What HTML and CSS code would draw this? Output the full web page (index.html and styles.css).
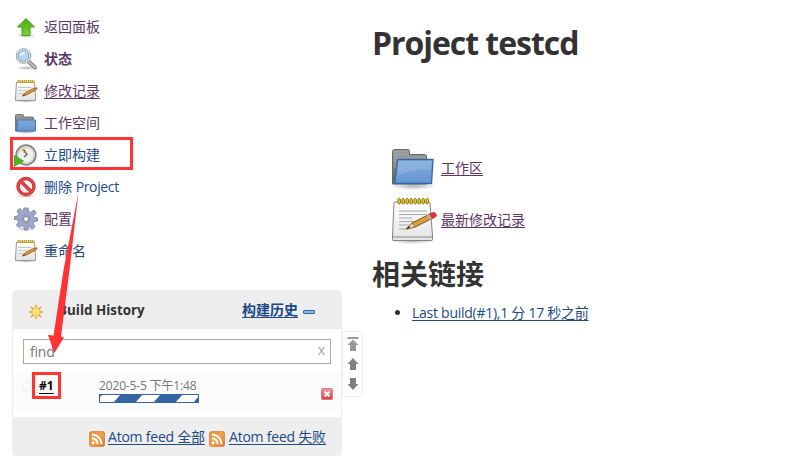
FILE: index.html
```html
<!DOCTYPE html>
<html lang="zh-CN">
<head>
<meta charset="utf-8">
<title>testcd</title>
<link rel="stylesheet" href="styles.css">
</head>
<body>
<svg class="defs" aria-hidden="true">
  <defs>
    <linearGradient id="green" x2="0" y2="1"><stop stop-color="#4ba51c"/><stop offset="1" stop-color="#7bd832"/></linearGradient>
    <linearGradient id="blue" x2="0" y2="1"><stop stop-color="#82aadb"/><stop offset="1" stop-color="#6597d0"/></linearGradient>
    <linearGradient id="gray" x2="0" y2="1"><stop stop-color="#a0a0a0"/><stop offset="1" stop-color="#626262"/></linearGradient>
    <linearGradient id="paper" x2="0" y2="1"><stop stop-color="#fff"/><stop offset="1" stop-color="#e4e4e4"/></linearGradient>
    <linearGradient id="orange" x2="1" y2="1"><stop stop-color="#e78734"/><stop offset=".5" stop-color="#f6a14a"/><stop offset="1" stop-color="#d8702a"/></linearGradient>
    <linearGradient id="red" x2="0" y2="1"><stop stop-color="#eca2a4"/><stop offset="1" stop-color="#d53b3e"/></linearGradient>
    <radialGradient id="shade"><stop stop-color="#000" stop-opacity=".3"/><stop offset="1" stop-color="#000" stop-opacity="0"/></radialGradient>
    <symbol id="folder" viewBox="0 0 48 48">
      <ellipse cx="24" cy="42" rx="24" ry="4" fill="url(#shade)"/>
      <path d="M3.500 40V7.500q0-2 2-2h13q2 0 2 2v3h15q2 0 2 2V40z" fill="url(#gray)" stroke="#666"/>
      <path d="M5 11h14M5 14h32M5 17h4M5 20h4M5 23h3" stroke="#aaa"/>
      <path d="M8.500 15.500h35.500l-1.500 24H5.500z" fill="url(#blue)" stroke="#3465a4" stroke-width="1.300" stroke-linejoin="round"/>
      <path d="M9.500 17h33l-.7 8Q22 25 8.500 32z" fill="#fff" opacity=".13"/>
    </symbol>
    <symbol id="folder-small" viewBox="0 0 24 24">
      <ellipse cx="12" cy="21" rx="11" ry="2" fill="url(#shade)"/>
      <path d="M1.500 20V4.500q0-1 1-1h6q1 0 1 1V6h9q1 0 1 1v13z" fill="url(#gray)" stroke="#777"/>
      <path d="M3.500 9h18v11h-19z" fill="url(#blue)" stroke="#4a79b5"/>
    </symbol>
    <symbol id="notepad" viewBox="0 0 48 48">
      <ellipse cx="23" cy="45" rx="22" ry="3" fill="url(#shade)"/>
      <path d="M6 6h34q1 0 1 1l2.500 33v3.500q0 1-1 1h-38q-1 0-1-1V40L5 7q0-1 1-1z" fill="url(#paper)" stroke="#858585" stroke-linejoin="round"/>
      <path d="M4 41h39" stroke="#b8b8b8" stroke-width="2"/>
      <path d="M10 15h28M10 18.500h28M10 22h13M10 25.500h27M10 29h21M10 33h10" stroke="#aaa"/>
      <g fill="#f6d52c" stroke="#806800" stroke-width=".9"><rect x="9" y="2.500" width="2.400" height="5.500" rx="1.200"/><rect x="13" y="2.500" width="2.400" height="5.500" rx="1.200"/><rect x="17" y="2.500" width="2.400" height="5.500" rx="1.200"/><rect x="21" y="2.500" width="2.400" height="5.500" rx="1.200"/><rect x="25" y="2.500" width="2.400" height="5.500" rx="1.200"/><rect x="29" y="2.500" width="2.400" height="5.500" rx="1.200"/><rect x="33" y="2.500" width="2.400" height="5.500" rx="1.200"/><rect x="37" y="2.500" width="2.400" height="5.500" rx="1.200"/></g>
      <path d="M17 33l6-6 18-9 3 4-18 9z" fill="#d9a043" stroke="#855716"/>
      <path d="M17 33l6-6 3 4z" fill="#efd7ad" stroke="#855716" stroke-width=".7"/><path d="M17 33l3-3 1 1.500z" fill="#222"/>
      <path d="M38 19.500l3-1.500 3 4-3 1.500z" fill="#bbb"/><path d="M40.500 18q5-3 6.500 0t-4 4.500z" fill="#e33" stroke="#b22" stroke-width=".7"/>
    </symbol>
    <symbol id="notepad-small" viewBox="0 0 24 24">
      <ellipse cx="12" cy="22" rx="11" ry="1.800" fill="url(#shade)"/>
      <path d="M2.500 3.500h18l1 15v3h-20v-3z" fill="url(#paper)" stroke="#999" stroke-linejoin="round"/>
      <path d="M4 8.500h13M4 11.500h9M4 14.500h6" stroke="#c4c4c4"/>
      <path d="M3.500 2.500h17" stroke="#c5a729" stroke-width="3" stroke-dasharray="1.500 .5"/>
      <path d="M8.500 17l3-3.500 8.500-4.500 1.500 2.200-9 4.800z" fill="#d79b3e" stroke="#8b611f" stroke-width=".8"/><path d="M8.500 17l1.500-1.700 1 1z" fill="#333"/>
      <path d="M20 9q3-1.500 3.500 0t-2 2.200z" fill="#de5a38"/>
    </symbol>
    <symbol id="rss" viewBox="0 0 16 16"><rect x=".4" y=".4" width="15.200" height="15.200" rx="2.500" fill="url(#orange)" stroke="#d57731" stroke-width=".7"/><circle cx="4.200" cy="11.800" r="1.500" fill="#fff"/><path d="M2.800 7.200a6 6 0 0 1 6 6M2.800 3.500a9.700 9.700 0 0 1 9.700 9.700" fill="none" stroke="#fff" stroke-width="1.900"/></symbol>
  </defs>
</svg>
<div class="page">
  <aside class="side">
    <nav class="tasks">
      <a class="task seen"><svg class="icon" viewBox="0 0 24 24"><ellipse cx="12" cy="20.500" rx="10" ry="2.500" fill="url(#shade)"/><path d="M12 3.500L20.500 12H16v8.500H8V12H3.500z" fill="url(#green)" stroke="#429e1c" stroke-linejoin="round"/></svg><span>返回面板</span></a>
      <a class="task seen current"><svg class="icon" viewBox="0 0 24 24"><ellipse cx="13" cy="21" rx="11" ry="2" fill="url(#shade)"/><path d="M14.500 14.500l6.500 6" stroke="#777" stroke-width="4" stroke-linecap="round"/><path d="M14.500 14.500l6.500 6" stroke="#c3c3c3" stroke-width="2.300" stroke-linecap="round"/><circle cx="9.500" cy="9" r="7.300" fill="#eee" stroke="#9a9a9a"/><circle cx="9.500" cy="9" r="5.300" fill="#b9d8f7" stroke="#6f9bd0"/><path d="M5.500 9q1-5 6-4-1 3-6 4z" fill="#e6f2ff"/></svg><span>状态</span></a>
      <a class="task seen underlined"><svg class="icon"><use href="#notepad-small"/></svg><span>修改记录</span></a>
      <a class="task seen"><svg class="icon"><use href="#folder-small"/></svg><span>工作空间</span></a>
      <a class="task"><svg class="icon" viewBox="0 0 24 24"><circle cx="12" cy="12" r="9.800" fill="#f1f1ec" stroke="#85857f" stroke-width="1.800"/><circle cx="12" cy="12" r="8" fill="none" stroke="#d1d1d1" stroke-width="1.300"/><path d="M12 12L6.500 7l5-2z" fill="#e9ce69"/><path d="M9.500 6.500l3.500 5-3 2.500" fill="none" stroke="#555" stroke-width="1.200"/><path d="M0 12.500L9.500 18 0 23.500z" fill="#51b51e" stroke="#419a1a" stroke-width=".8"/></svg><span>立即构建</span></a>
      <a class="task"><svg class="icon" viewBox="0 0 24 24"><ellipse cx="12" cy="21" rx="10" ry="2" fill="url(#shade)"/><circle cx="12" cy="11.500" r="8" fill="#f8f4f4" stroke="#c52a2e" stroke-width="3.400"/><path d="M6.500 6l11 11" stroke="#c52a2e" stroke-width="3.600"/><circle cx="12" cy="11.500" r="8" fill="none" stroke="#e0484b" stroke-width="2"/><path d="M6.500 6l11 11" stroke="#e0484b" stroke-width="2.200"/></svg><span>删除 <span class="latin">Project</span></span></a>
      <a class="task seen"><svg class="icon" viewBox="0 0 24 24"><ellipse cx="12" cy="22" rx="10" ry="2" fill="url(#shade)"/><path d="M10 1h4l.5 3.500 2 1L20 3l2 2.500L19.500 9l.5 1.500 3.500.5v3l-3.500.5-1 2 2 3-2.500 2.500-3-2.500-1.500.5-.5 3h-3l-.5-3.500-2-1-3 2L2.500 18l2-3-.5-2-3.500-.5v-3L4 9l1-2-2-3 2.500-2.500 3 2.500 1-.5z" fill="#9fa8ca" stroke="#8089b0" stroke-linejoin="round"/><circle cx="12" cy="12" r="4" fill="#b7bdd7" stroke="#8992b3"/><circle cx="12" cy="12" r="2.500" fill="#fff" stroke="#6f7999"/></svg><span>配置</span></a>
      <a class="task"><svg class="icon"><use href="#notepad-small"/></svg><span>重命名</span></a>
      <i class="task-mark"></i>
    </nav>
    <section class="history">
      <header class="history-head">
        <svg class="sun" viewBox="0 0 16 16"><path d="M8 1v2M8 13v2M1 8h2M13 8h2M3 3l2 2M11 11l2 2M13 3l-2 2M3 13l2-2" stroke="#eda52f" stroke-width="1.600"/><circle cx="8" cy="8" r="4.300" fill="#ffe47b" stroke="#efa83d"/></svg>
        <b class="history-title">Build History</b>
        <a class="trend">构建历史</a><i class="collapse"></i>
      </header>
      <div class="search"><span>find</span><span class="clear">x</span></div>
      <div class="build">
        <i class="ball"></i><a class="number">#1</a>
        <div class="build-info"><span class="date">2020-5-5 下午1:48</span><svg class="progress" viewBox="0 0 100 9"><path fill="#fff" d="M0 0h100v9H0z"/><path d="M14 9l8-9h22l-8 9zM54 9l8-9h22l-8 9zM94 9l6-7v7zM0 0h4L0 4z" fill="#3465a4"/><path d="M.5.500h99v8H.5z" fill="none" stroke="#3465a4"/></svg></div>
        <svg class="stop" viewBox="0 0 12 12"><rect x=".5" y=".5" width="11" height="11" rx="1" fill="url(#red)" stroke="#d97a7b"/><path d="M3.500 3.800l5 4.700M8.500 3.800l-5 4.700" stroke="#fff" stroke-width="1.900"/></svg>
      </div>
      <footer class="feeds"><svg class="rss"><use href="#rss"/></svg><a class="feed-all">Atom feed 全部</a><svg class="rss"><use href="#rss"/></svg><a class="feed-fail">Atom feed 失败</a></footer>
      <div class="pager">
        <svg viewBox="0 0 12 14"><path d="M.5 0h11v2H.5zM6 2.500L11.500 8H9v6H3V8H.5z" fill="#999"/></svg>
        <svg viewBox="0 0 12 14"><path d="M6 1l5.500 6H9v6H3V7H.5z" fill="#808080"/></svg>
        <svg viewBox="0 0 12 14"><path d="M6 13l5.500-6H9V1H3v6H.5z" fill="#808080"/></svg>
      </div>
    </section>
    <i class="number-mark"></i>
    <svg class="pointer" viewBox="0 0 50 170"><path d="M37.500 2L28.500 80l-8.500 66.500 3 1L13.300 163 7 145l5.500.500 10-65.500z" fill="#f33"/></svg>
  </aside>
  <main class="main">
    <h1>Project testcd</h1>
    <div class="artifacts">
      <div class="artifact"><svg class="big"><use href="#folder"/></svg><a>工作区</a></div>
      <div class="artifact"><svg class="big"><use href="#notepad"/></svg><a>最新修改记录</a></div>
    </div>
    <h2>相关链接</h2>
    <ul><li><a>Last build(#1),1 分 17 秒之前</a></li></ul>
  </main>
</div>
</body>
</html>
```
FILE: styles.css
```css
* { box-sizing: border-box; }
body { margin: 0; background: #fff; color: #333; font: 14px/20px "Open Sans", "Noto Sans CJK SC", sans-serif; }
svg { display: block; flex: none; }
.defs { position: absolute; width: 0; height: 0; }
.page { display: flex; width: 792px; height: 468px; overflow: hidden; }
.side { position: relative; flex: none; width: 372px; padding: 11px 30px 0 12px; }
.tasks { position: relative; height: 279px; }
.task { display: flex; align-items: center; height: 32px; padding-left: 2px; gap: 6px; color: #204a87; white-space: nowrap; }
.seen { color: #5c3566; }
.current { font-weight: 700; }
.latin { letter-spacing: -.35px; }
.underlined span { text-decoration: underline; text-underline-offset: 2px; }
.icon { width: 24px; height: 24px; }
.task-mark { position: absolute; left: -2px; top: 126px; width: 123px; height: 33px; border: 3px solid #f33; }
.history { position: relative; width: 330px; height: 166px; border: 1px solid #eee; border-radius: 4px; }
.history-head { display: flex; align-items: center; height: 38px; padding-left: 15px; background: #eee; }
.sun { width: 16px; height: 16px; margin-top: 4px; }
.history-title { width: 184px; margin-left: 14px; font-size: 13.4px; }
.trend { color: #204a87; font-weight: 700; text-decoration: underline; text-underline-offset: 2px; }
.collapse { width: 12px; height: 4px; margin: 4px 0 0 5px; border: 1px solid #3465a4; border-radius: 1px; background: #8fb8e8; }
.search { display: flex; justify-content: space-between; align-items: center; height: 25px; margin: 10px 10px 8px; padding: 0 5px 0 6px; border: 1px solid #aaa; background: #fff; color: #777; line-height: 20px; letter-spacing: -.2px; }
.clear { margin-bottom: 3px; color: #aaa; }
.build { display: flex; height: 38px; background: #fbfbfb; }
.ball { width: 12px; height: 12px; margin: 8px 0 0 8px; border-radius: 50%; background: radial-gradient(#fff, #ededed); }
.number { width: 15px; margin: 4px 0 0 6px; color: #000; font-size: 12px; font-weight: 700; text-decoration: underline; text-underline-offset: 3px; }
.build-info { width: 100px; margin: 4px 0 0 45px; }
.date { display: block; height: 18px; padding-top: 1px; color: #777; font-size: 12px; line-height: 18px; letter-spacing: -.15px; white-space: nowrap; }
.progress { width: 100px; height: 9px; }
.stop { width: 12px; height: 12px; margin: 16px 0 0 122px; }
.feeds { display: flex; align-items: center; height: 38px; margin-top: 7px; padding: 2px 0 0 76px; background: #eee; color: #204a87; letter-spacing: -.22px; white-space: nowrap; }
.feeds a, .artifact a, li a { text-decoration: underline; text-underline-offset: 2px; }
.rss { width: 16px; height: 16px; margin-top: 3px; }
.feed-all { width: 101px; margin-left: 3px; }
.feed-fail { margin-left: 4px; }
.pager { position: absolute; left: 329px; top: 40px; display: flex; flex-direction: column; align-items: center; gap: 6px; width: 21px; height: 66px; padding-top: 5px; border: 1px solid #eee; border-radius: 0 4px 4px 0; background: #fff; }
.pager svg { width: 12px; height: 14px; }
.number-mark { position: absolute; left: 32px; top: 372px; width: 29px; height: 27px; border: 3px solid #f33; }
.pointer { position: absolute; left: 41px; top: 190px; width: 50px; height: 170px; }
.main { width: 420px; }
h1 { height: 38px; margin: 24px 0 80px; font-size: 32px; line-height: 38px; letter-spacing: -1.05px; }
.artifacts { height: 114px; padding-left: 17px; }
.artifact { display: flex; align-items: center; height: 52px; color: #5c3566; }
.big { width: 48px; height: 48px; }
.artifact a { margin-left: 4px; }
h2 { height: 36px; margin: 0 0 11px; font-size: 28px; line-height: 36px; }
ul { margin: 0; padding-left: 40px; }
li a { color: #204a87; letter-spacing: -.26px; }
```
